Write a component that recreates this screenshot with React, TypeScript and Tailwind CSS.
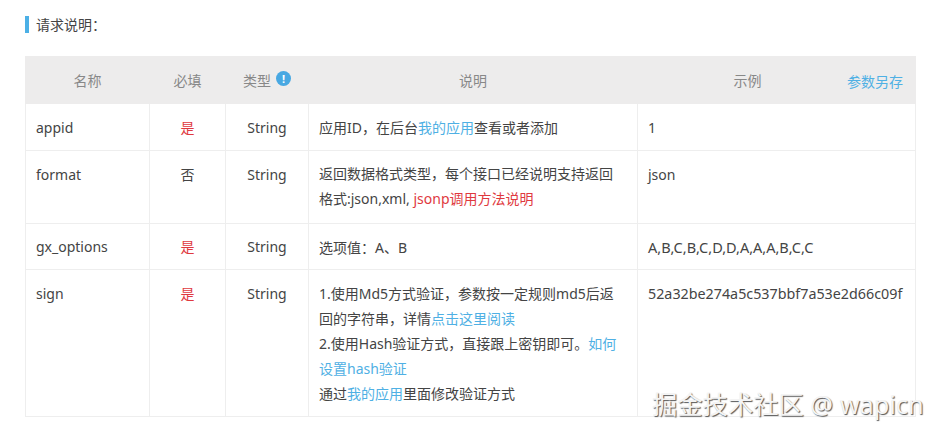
import React from 'react';

const Link: React.FC<{ children: React.ReactNode }> = ({ children }) => (
  <a className="text-[#4fb0e4]">{children}</a>
);

const Required: React.FC<{ yes?: boolean }> = ({ yes }) =>
  yes ? <span className="text-[#e0393e]">是</span> : <span>否</span>;

const base = 'border border-[#eeeeee] align-top';
const cell = `${base} pl-[10px] pr-[12px]`;
const center = `${base} px-[11px] text-center`;
const head = 'border border-[#edecec] font-normal';

export default function App() {
  return (
    <div className="relative h-[435px] w-[940px] overflow-hidden bg-white pl-[25px] pt-[16px] font-['Noto_Sans','Noto_Sans_CJK_SC',sans-serif] text-[#444444]">
      <div className="h-[17px] border-l-[4px] border-[#4cb0e6] pl-[7px] text-[14px] leading-[18px]">
        请求说明：
      </div>

      <table className="mt-[23px] w-[890px] table-fixed border-collapse text-[14px]">
        <colgroup>
          <col className="w-[124px]" />
          <col className="w-[76px]" />
          <col className="w-[83px]" />
          <col className="w-[329px]" />
          <col className="w-[278px]" />
        </colgroup>
        <thead>
          <tr className="h-[47px] bg-[#edecec] text-center text-[14px] text-[#888888]">
            <th className={head}>名称</th>
            <th className={head}>必填</th>
            <th className={head}>
              <span className="inline-flex items-start justify-center gap-[5px]">
                类型
                <span className="mt-[1px] flex h-[15px] w-[15px] items-center justify-center rounded-full bg-[#48a8e2] text-[11px] font-bold leading-none text-white">
                  !
                </span>
              </span>
            </th>
            <th className={head}>说明</th>
            <th className={`${head} relative pr-[58px]`}>
              示例
              <a className="absolute right-[12px] top-[14px] text-[#4fb0e4]">参数另存</a>
            </th>
          </tr>
        </thead>
        <tbody>
          <tr className="h-[47px]">
            <td className={`${cell} pt-[13px]`}>appid</td>
            <td className={`${center} pt-[13px]`}>
              <Required yes />
            </td>
            <td className={`${center} pt-[13px]`}>String</td>
            <td className={`${cell} pt-[13px]`}>
              应用ID，在后台<Link>我的应用</Link>查看或者添加
            </td>
            <td className={`${cell} pt-[13px]`}>1</td>
          </tr>
          <tr className="h-[73px]">
            <td className={`${cell} pt-[13px]`}>format</td>
            <td className={`${center} pt-[13px]`}>
              <Required />
            </td>
            <td className={`${center} pt-[13px]`}>String</td>
            <td className={`${cell} pt-[10px] leading-[25px]`}>
              返回数据格式类型，每个接口已经说明支持返回格式:json,xml,{' '}
              <span className="text-[#e0393e]">jsonp调用方法说明</span>
            </td>
            <td className={`${cell} pt-[13px]`}>json</td>
          </tr>
          <tr className="h-[46px]">
            <td className={`${cell} pt-[12px]`}>gx_options</td>
            <td className={`${center} pt-[12px]`}>
              <Required yes />
            </td>
            <td className={`${center} pt-[12px]`}>String</td>
            <td className={`${cell} pt-[13px]`}>选项值：A、B</td>
            <td className={`${cell} pt-[13px] text-[14.5px]`}>A,B,C,B,C,D,D,A,A,A,B,C,C</td>
          </tr>
          <tr className="h-[147px]">
            <td className={`${cell} pt-[13px]`}>sign</td>
            <td className={`${center} pt-[13px]`}>
              <Required yes />
            </td>
            <td className={`${center} pt-[13px]`}>String</td>
            <td className={`${cell} pt-[11px] leading-[25px]`}>
              1.使用Md5方式验证，参数按一定规则md5后返回的字符串，详情<Link>点击这里阅读</Link>
              <br />
              2.使用Hash验证方式，直接跟上密钥即可。<Link>如何设置hash验证</Link>
              <br />
              通过<Link>我的应用</Link>里面修改验证方式
            </td>
            <td className={`${cell} pt-[13px] text-[14.3px] !pr-0`}>52a32be274a5c537bbf7a53e2d66c09f</td>
          </tr>
        </tbody>
      </table>

      <div className="absolute left-[652px] top-[387px] whitespace-nowrap text-[25.3px] leading-[34px] text-[#f4f4f4] [text-shadow:1px_1px_1px_#555555]">
        掘金技术社区 @ wapicn
      </div>
    </div>
  );
}
